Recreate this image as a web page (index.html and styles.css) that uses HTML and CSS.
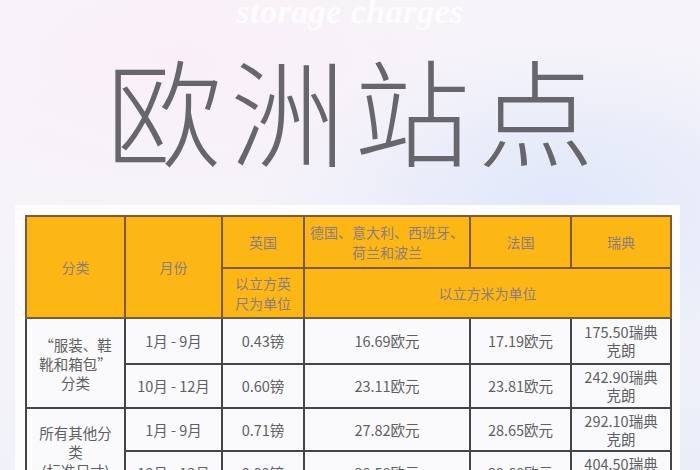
FILE: index.html
```html
<!DOCTYPE html>
<html lang="zh-CN">
<head>
<meta charset="utf-8">
<link rel="stylesheet" href="styles.css">
</head>
<body>
<div class="page">
  <header class="hero">
    <div class="subtitle">storage charges</div>
    <h1 class="title">欧洲站点</h1>
  </header>
  <section class="card">
    <table class="fees">
      <colgroup>
        <col class="c1"><col class="c2"><col class="c3"><col class="c4"><col class="c5"><col class="c6">
      </colgroup>
      <thead>
        <tr class="h1">
          <th rowspan="2">分类</th>
          <th rowspan="2">月份</th>
          <th>英国</th>
          <th>德国、意大利、西班牙、荷兰和波兰</th>
          <th>法国</th>
          <th>瑞典</th>
        </tr>
        <tr class="h2">
          <th class="narrow">以立方英尺为单位</th>
          <th colspan="3">以立方米为单位</th>
        </tr>
      </thead>
      <tbody>
        <tr class="r1">
          <td rowspan="2" class="cat">“服装、鞋靴和箱包”分类</td>
          <td>1月 - 9月</td>
          <td>0.43镑</td>
          <td>16.69欧元</td>
          <td>17.19欧元</td>
          <td class="sek">175.50瑞典克朗</td>
        </tr>
        <tr class="r2">
          <td>10月 - 12月</td>
          <td>0.60镑</td>
          <td>23.11欧元</td>
          <td>23.81欧元</td>
          <td class="sek">242.90瑞典克朗</td>
        </tr>
        <tr class="r3">
          <td rowspan="2" class="cat">所有其他分类<br>(标准尺寸)</td>
          <td>1月 - 9月</td>
          <td>0.71镑</td>
          <td>27.82欧元</td>
          <td>28.65欧元</td>
          <td class="sek">292.10瑞典克朗</td>
        </tr>
        <tr class="r4">
          <td>10月 - 12月</td>
          <td>0.99镑</td>
          <td>38.58欧元</td>
          <td>39.68欧元</td>
          <td class="sek">404.50瑞典克朗</td>
        </tr>
      </tbody>
    </table>
  </section>
</div>
</body>
</html>
```

FILE: styles.css
```css
html, body {
  margin: 0;
  padding: 0;
}
body {
  width: 700px;
  height: 470px;
  overflow: hidden;
  font-family: "Noto Sans CJK SC", "Noto Sans", sans-serif;
  background:
    radial-gradient(ellipse 320px 160px at 180px 60px, rgba(250, 238, 248, 0.9), rgba(250, 238, 248, 0) 100%),
    radial-gradient(ellipse 300px 160px at 560px 200px, rgba(222, 230, 250, 0.9), rgba(222, 230, 250, 0) 100%),
    linear-gradient(165deg, #f8f5f9 0%, #f4f3f9 55%, #ebeef9 100%);
}
.page {
  width: 700px;
  height: 470px;
  overflow: hidden;
}
.hero {
  height: 205px;
  display: flex;
  flex-direction: column;
  align-items: center;
}
.subtitle {
  margin-top: 1px;
  height: 22px;
  font-family: "Liberation Serif", serif;
  font-style: italic;
  font-weight: bold;
  font-size: 34px;
  line-height: 22px;
  color: rgba(255, 255, 255, 0.85);
  letter-spacing: 0.5px;
}
.title {
  margin: 26px 0 0 0;
  font-family: "Noto Sans CJK SC", sans-serif;
  font-weight: 300;
  font-size: 116px;
  line-height: 116px;
  letter-spacing: 8px;
  padding-left: 8px;
  color: #67666c;
}
.card {
  margin-left: 15px;
  width: 645px;
  padding: 10px 10px 0 10px;
  background: #fdfdfe;
  height: 300px;
}
.fees {
  width: 645px;
  border-collapse: collapse;
  table-layout: fixed;
  font-size: 14.5px;
  text-align: center;
}
.c1 { width: 99px; }
.c2 { width: 97px; }
.c3 { width: 82px; }
.c4 { width: 166px; }
.c5 { width: 101px; }
.c6 { width: 100px; }
.fees th {
  background: #fdb714;
  color: #8a7c84;
  font-weight: normal;
  font-size: 14px;
  border: 2px solid #7a5a3a;
  line-height: 20px;
  padding: 2px 4px;
}
.fees th.narrow {
  padding: 0 10px;
}
.fees td {
  background: #fafafc;
  color: #5f5f63;
  border: 2px solid #454545;
  line-height: 18px;
  padding: 0 6px;
}
.fees td.cat {
  padding: 0 12px;
  line-height: 19px;
}
.fees td.sek {
  padding: 0 6px;
}
.h1 { height: 52px; }
.h2 { height: 50px; }
.r1 { height: 46px; }
.r2 { height: 44px; }
.r3 { height: 43px; }
.r4 { height: 44px; }
```
